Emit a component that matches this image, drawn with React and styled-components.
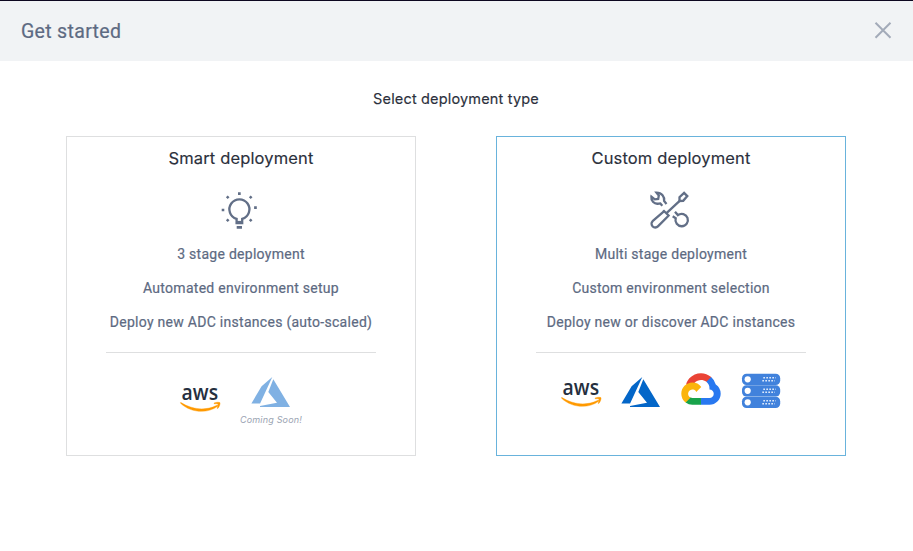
import React from 'react';
import styled, { createGlobalStyle } from 'styled-components';

const GlobalStyle = createGlobalStyle`
  * { box-sizing: border-box; }
  body {
    margin: 0;
    background: #fff;
    font-family: Inter, "Liberation Sans", sans-serif;
  }
`;

const Page = styled.div`
  height: 551px;
  overflow: hidden;
  border-top: 1px solid #0d0720;
`;

const Header = styled.header`
  display: flex;
  align-items: center;
  justify-content: space-between;
  height: 60px;
  padding: 0 21px;
  background: #f1f3f5;
`;

const HeaderTitle = styled.h1`
  margin: 0;
  padding-top: 2px;
  font: 400 19.5px/24px Roboto, sans-serif;
  letter-spacing: 0.32px;
  color: #5d6a82;
  -webkit-text-stroke: 0.2px #5d6a82;
`;

const CloseButton = styled.button`
  display: flex;
  width: 18px;
  height: 18px;
  padding: 0;
  border: 0;
  background: none;
`;

const Main = styled.main`
  padding: 28px 0 0 66px;
`;

const Prompt = styled.h2`
  width: 780px;
  margin: 0 0 27px;
  text-align: center;
  font-size: 14.5px;
  font-weight: 400;
  line-height: 20px;
  letter-spacing: 0.17px;
  color: #2b303c;
  -webkit-text-stroke: 0.15px #2b303c;
`;

const Cards = styled.div`
  display: flex;
  gap: 80px;
`;

const Card = styled.section`
  display: flex;
  flex-direction: column;
  align-items: center;
  width: 350px;
  height: 320px;
  padding-top: 10px;
  border: 1px solid ${(p) => (p.$selected ? '#69b3dc' : '#dedfe0')};
`;

const CardTitle = styled.h3`
  margin: 0;
  font-size: 16.5px;
  font-weight: 400;
  line-height: 22px;
  letter-spacing: 0.14px;
  color: #2b303c;
  -webkit-text-stroke: 0.15px #2b303c;
`;

const CardIcon = styled.svg`
  width: 44px;
  height: 40px;
  margin-top: 21px;
  fill: none;
  stroke: #626f87;
  stroke-width: 2.3;
`;

const Features = styled.ul`
  display: flex;
  flex-direction: column;
  align-items: center;
  gap: 14px;
  width: 270px;
  height: 123px;
  margin: 0;
  padding: 14px 0 0;
  list-style: none;
  border-bottom: 1px solid #dedfe0;
`;

const Feature = styled.li`
  font: 400 14px/20px Roboto, sans-serif;
  letter-spacing: 0.28px;
  white-space: nowrap;
  color: #5d6a82;
  -webkit-text-stroke: 0.2px #5d6a82;
`;

const Providers = styled.div`
  display: flex;
  gap: 20px;
  margin-top: ${(p) => p.$top}px;
`;

const PendingProvider = styled.div`
  display: flex;
  flex-direction: column;
  align-items: center;
  width: 62px;
  margin-top: -5px;
`;

const Faded = styled.div`
  height: 40px;
  opacity: 0.5;
`;

const Caption = styled.span`
  margin-top: 2px;
  font-size: 9px;
  font-style: italic;
  line-height: 13px;
  letter-spacing: 0.18px;
  white-space: nowrap;
  color: #9aa3b2;
`;

const Logo = styled.svg`
  display: block;
  width: 40px;
  height: 40px;
  overflow: visible;
`;

const LogoWord = styled.text`
  font: 600 22px "Open Sans", sans-serif;
  fill: #252f3e;
`;

function BulbIcon() {
  return (
    <CardIcon viewBox="9 10 44 40">
      <path d="M26.6 43v-4.1a10 10 0 1 1 5.6 0V43z" />
      <path d="M26.5 42.3h5.8" strokeWidth="2.8" />
      <g fill="#626f87" stroke="none">
        <path d="M28 12.3h2.7V15H28zM11.7 28.7h2.6v2.6h-2.6zM44.1 26.2h2.7v2.7h-2.7zM26.7 46.1h5.3v2.6h-5.3z" />
        <path d="M17.7 15.5l1.8 1.8-1.8 1.8-1.8-1.8zM40.7 15.5l1.8 1.8-1.8 1.8-1.8-1.8zM17.7 38.5l1.8 1.8-1.8 1.8-1.8-1.8zM40.7 38.5l1.8 1.8-1.8 1.8-1.8-1.8z" />
      </g>
    </CardIcon>
  );
}

function ToolsIcon() {
  return (
    <CardIcon viewBox="9 10 44 40">
      <path d="M24.2 31.2L12.6 41.2a3.6 3.6 0 0 0 5.3 5.2l10.6-10.7" />
      <path d="M23.2 30.2l6.2 6.1M26.5 33.2L40.2 20.4" />
      <path d="M39.5 21v-3.8l4.6-4.3 3.2 3.2-4.1 4.7z" />
      <path d="M26.5 24l-2.4-3c.6-4.2-2.2-8.3-7.6-8.4l2.3 3-.6 3.3-3.4.4-3.4-2.6c-.6 4 2.9 7.9 7.3 6.9l1.6-.1 2 2.3" />
      <path d="M35 31.7l2.9 3.4a6.2 6.2 0 1 1-2.2 3.2l-3-2" />
    </CardIcon>
  );
}

function AwsLogo() {
  return (
    <Logo viewBox="0 0 40 40">
      <LogoWord x="1.6" y="23.6" textLength="36.5" lengthAdjust="spacingAndGlyphs">aws</LogoWord>
      <path d="M1 26.6c11.5 7.3 24.8 8.3 36 2.7.8-.4 1.4.4.7.9C27.3 37.9 11 37 .6 27.3c-.4-.4-.1-1 .4-.7z" fill="#ff9900" stroke="#ff9900" strokeWidth="0.4" />
      <path d="M34 27.1c1.8-.9 5.4-1.2 6-.4.4.9-.6 4.2-2.3 5.9l-.6-.3c.6-1.4 1.3-3.4.9-4s-2.3-.6-3.8-.5z" fill="#ff9900" stroke="#ff9900" strokeWidth="0.4" />
    </Logo>
  );
}

function AzureLogo() {
  return (
    <Logo viewBox="0 0 40 40">
      <path d="M21.3 6L10.6 15.3.4 32.4h8.700zM22.3 8.3l-5 12.7 8.7 10.700L9 34.900v1.200h30z" fill="#0366c8" />
    </Logo>
  );
}

function GoogleCloudLogo() {
  return (
    <Logo viewBox="-2 -14 260 260">
      <path fill="#ea4335" d="M170.252 56.819l22.253-22.253 1.483-9.37C153.437-11.677 88.976-7.496 52.42 33.92 42.267 45.423 34.734 59.764 30.717 74.573l7.97-1.123 44.505-7.34 3.436-3.513c19.797-21.742 53.27-24.667 76.128-6.168l7.496.39z" />
      <path fill="#2878f0" d="M224.205 73.918a100.249 100.249 0 0 0-30.217-48.722l-31.232 31.232a55.515 55.515 0 0 1 20.379 44.037v5.544c15.35 0 27.797 12.445 27.797 27.796 0 15.352-12.446 27.485-27.797 27.485h-55.671l-5.466 5.934v33.34l5.466 5.231h55.67c39.93.311 72.553-31.494 72.864-71.424a72.303 72.303 0 0 0-31.793-60.453" />
      <path fill="#18a34b" d="M71.87 205.796h55.593V161.29H71.87a27.275 27.275 0 0 1-11.4-2.498l-7.887 2.42-22.409 22.253-1.952 7.574a72.083 72.083 0 0 0 43.648 14.757" />
      <path fill="#fbb40a" d="M71.87 61.426C31.94 61.663-.237 94.228.001 134.158a72.301 72.301 0 0 0 28.222 56.881l32.247-32.246c-13.99-6.322-20.208-22.786-13.887-36.776 6.32-13.99 22.786-20.208 36.775-13.888a27.796 27.796 0 0 1 13.887 13.888l32.248-32.248A72.224 72.224 0 0 0 71.87 61.426" />
    </Logo>
  );
}

function ServerLogo() {
  return (
    <Logo viewBox="0 0 40 40">
      {[2.8, 14.3, 25.8].map((y) => (
        <g key={y}>
          <rect x="1" y={y} width="38.2" height="11.2" rx="4.5" fill="#4182dc" />
          <circle cx="6.7" cy={y + 5.5} r="3.1" fill="#fff" />
          <path
            d={`M22.3 ${y + 4}h12.5M21.3 ${y + 6.9}h12.5`}
            stroke="#dce9fb"
            strokeWidth="1.6"
            strokeDasharray="1.7 1.3"
          />
        </g>
      ))}
    </Logo>
  );
}

export default function App() {
  return (
    <>
      <GlobalStyle />
      <Page>
        <Header>
          <HeaderTitle>Get started</HeaderTitle>
          <CloseButton aria-label="Close">
            <svg width="18" height="18" viewBox="0 0 18 18" fill="none" stroke="#a3abb9" strokeWidth="2">
              <path d="M1.5 .7l15 15M16.5 .7l-15 15" />
            </svg>
          </CloseButton>
        </Header>
        <Main>
          <Prompt>Select deployment type</Prompt>
          <Cards>
            <Card>
              <CardTitle>Smart deployment</CardTitle>
              <BulbIcon />
              <Features>
                <Feature>3 stage deployment</Feature>
                <Feature>Automated environment setup</Feature>
                <Feature>Deploy new ADC instances (auto-scaled)</Feature>
              </Features>
              <Providers $top={23}>
                <AwsLogo />
                <PendingProvider>
                  <Faded><AzureLogo /></Faded>
                  <Caption>Coming Soon!</Caption>
                </PendingProvider>
              </Providers>
            </Card>
            <Card $selected>
              <CardTitle>Custom deployment</CardTitle>
              <ToolsIcon />
              <Features>
                <Feature>Multi stage deployment</Feature>
                <Feature>Custom environment selection</Feature>
                <Feature>Deploy new or discover ADC instances</Feature>
              </Features>
              <Providers $top={18}>
                <AwsLogo />
                <AzureLogo />
                <GoogleCloudLogo />
                <ServerLogo />
              </Providers>
            </Card>
          </Cards>
        </Main>
      </Page>
    </>
  );
}
